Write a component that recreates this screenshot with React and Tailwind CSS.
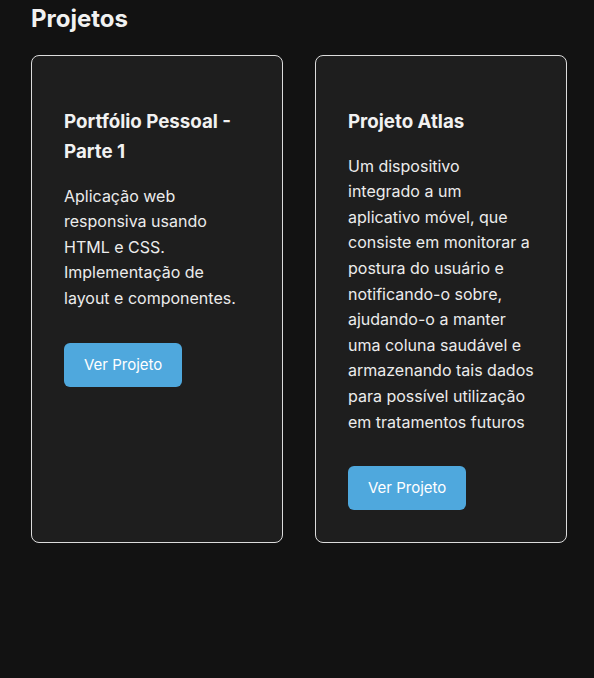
const projects = [
  {
    title: "Portfólio Pessoal - Parte 1",
    description:
      "Aplicação web responsiva usando HTML e CSS. Implementação de layout e componentes.",
  },
  {
    title: "Projeto Atlas",
    description:
      "Um dispositivo integrado a um aplicativo móvel, que consiste em monitorar a postura do usuário e notificando-o sobre, ajudando-o a manter uma coluna saudável e armazenando tais dados para possível utilização em tratamentos futuros",
  },
];

const App = () => {
  return (
    <div className="min-h-screen bg-[#121212] px-[31px] text-[#f1f1f1] font-['Inter',sans-serif]">
      <h2 className="text-[24px] font-bold leading-[1.6]">Projetos</h2>
      <div className="grid grid-cols-[252px_252px] gap-8 mt-[16.6px]">
        {projects.map((project, index) => (
          <div
            key={index}
            className="bg-[#1e1e1e] border border-[#dcdcdc] rounded-lg p-8 flex flex-col items-start"
          >
            <h3 className="text-[18.72px] font-bold leading-[1.6] mt-[18.72px] mb-[17px]">
              {project.title}
            </h3>
            <p className="text-[16px] leading-[1.6] text-[#ececec]">
              {project.description}
            </p>
            <button className="mt-[31px] bg-[#4fa8dd] text-white text-[15px] leading-[20px] px-5 py-3 rounded-md">
              Ver Projeto
            </button>
          </div>
        ))}
      </div>
    </div>
  );
};

export default App;
